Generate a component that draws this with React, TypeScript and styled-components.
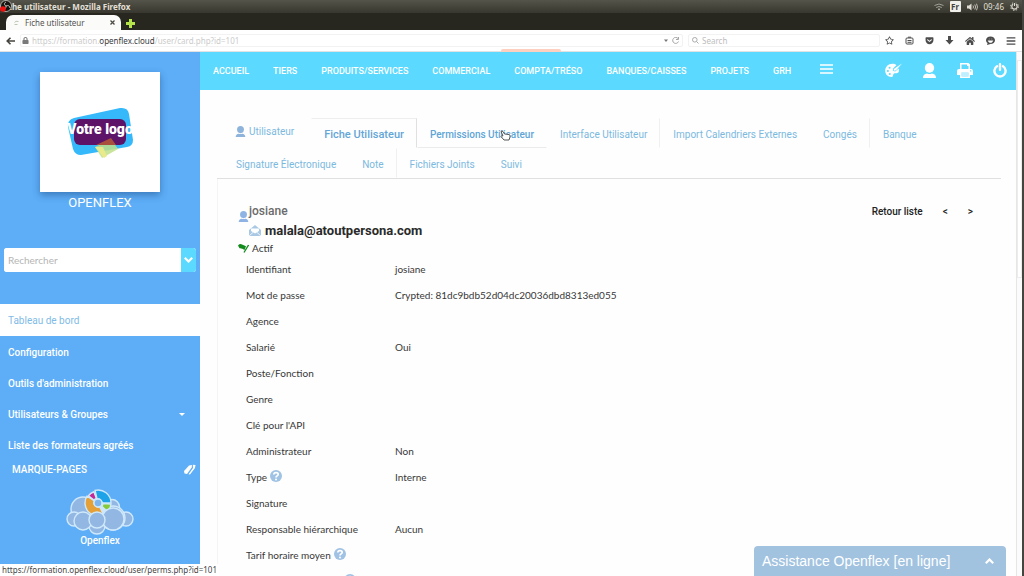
import React from "react";
import styled, { createGlobalStyle, css } from "styled-components";
import { FaRegStar, FaGetPocket, FaHome, FaBars, FaLock } from "react-icons/fa";

const ui = '"Noto Sans", "DejaVu Sans", sans-serif';
const roboto = 'Roboto, "Liberation Sans", sans-serif';
const lato = 'Lato, "Open Sans", sans-serif';

const GlobalStyle = createGlobalStyle`
  * { box-sizing: border-box; }
  body { margin: 0; background: #fff; font-family: ${roboto}; }
  a { color: inherit; text-decoration: none; }
  button { border: 0; padding: 0; background: none; color: inherit; font: inherit; cursor: pointer; }
  h1, p { margin: 0; padding: 0; }
  svg { display: block; flex: none; }
`;

const Screen = styled.div`
  position: relative;
  display: flex;
  flex-direction: column;
  height: 100vh;
  overflow: hidden;
  border-right: 2px solid #45443e;
`;

/* Desktop panel */
const Panel = styled.header`
  display: flex;
  align-items: center;
  justify-content: space-between;
  height: 13px;
  padding: 0 3px 0 1px;
  background: linear-gradient(#55544a, #38372f);
  color: #e4e0d8;
  font: 8px/13px ${ui};
  position: relative;
`;
const WindowTitle = styled.span`
  font-weight: 700;
`;
const Recorder = styled.span`
  position: absolute;
  left: 0;
  top: 0;
`;
const Indicators = styled.div`
  display: flex;
  align-items: center;
  gap: 6px;
`;
const Language = styled.span`
  width: 11px;
  height: 11px;
  border-radius: 1px;
  background: #f0efe9;
  color: #45443c;
  font: 700 8px/11px ${ui};
  text-align: center;
`;
const TabStrip = styled.div`
  display: flex;
  align-items: flex-end;
  gap: 5px;
  height: 17px;
  padding-left: 6px;
  background: #27261f;
`;
const BrowserTab = styled.div`
  display: flex;
  align-items: center;
  gap: 6px;
  width: 115px;
  height: 15px;
  padding: 0 6px 0 8px;
  border-radius: 7px 7px 0 0;
  background: #fbfbfa;
  color: #55544f;
  font: 8px/15px ${ui};
`;
const TabTitle = styled.span`
  flex: 1;
  white-space: nowrap;
`;
const NewTab = styled.button`
  height: 13px;
`;
const AddressRow = styled.div`
  display: flex;
  align-items: center;
  gap: 5px;
  height: 22px;
  padding: 0 6px 0 6px;
  border-bottom: 1px solid #e2e2e2;
  background: #fff;
  color: #4c4c4c;
`;
const Address = styled.div`
  display: flex;
  align-items: center;
  flex: 1;
  height: 13px;
  padding: 0 2px 0 1px;
  border: 1px solid #f2f2f2;
  border-radius: 2px;
  color: #cbcbcb;
  font: 8px/12px ${ui};
`;
const Url = styled.span`
  flex: 1;
  margin-left: 3px;
  white-space: nowrap;
`;
const Domain = styled.span`
  color: #3c3c3c;
`;
const SearchWeb = styled.label`
  display: flex;
  align-items: center;
  gap: 3px;
  width: 192px;
  height: 13px;
  padding: 0 3px;
  border: 1px solid #f2f2f2;
  border-radius: 2px;
  color: #999;
`;
const SearchWebInput = styled.input`
  flex: 1;
  min-width: 0;
  padding: 0;
  border: 0;
  outline: 0;
  background: none;
  font: 8px/12px ${ui};
  &::placeholder { color: #bdbdbd; opacity: 1; }
`;
const BrowserTools = styled.div`
  display: flex;
  align-items: center;
  gap: 11px;
`;
const Alert = styled.span`
  position: absolute;
  top: 49px;
  left: 49%;
  width: 60px;
  height: 3px;
  border-radius: 2px 2px 0 0;
  background: #fccfbe;
`;

/* Application */
const Viewport = styled.div`
  display: flex;
  flex: 1;
  min-height: 0;
`;
const Sidebar = styled.aside`
  display: flex;
  flex-direction: column;
  flex: none;
  width: 200px;
  margin-bottom: 12px;
  background: #5dadf7;
  color: #fff;
`;
const LogoCard = styled.div`
  display: flex;
  align-items: center;
  justify-content: center;
  align-self: center;
  width: 120px;
  height: 120px;
  margin-top: 20px;
  background: #fff;
  box-shadow: 0 3px 7px rgba(20, 60, 110, 0.45);
`;
const Company = styled.p`
  margin-top: 2px;
  font-size: 13px;
  line-height: 18px;
  text-align: center;
`;
const SideSearch = styled.form`
  display: flex;
  height: 24px;
  margin: 36px 4px 32px 4px;
  border-radius: 3px;
  background: #fff;
  overflow: hidden;
`;
const SideInput = styled.input`
  flex: 1;
  min-width: 0;
  padding: 0 4px;
  border: 0;
  outline: 0;
  color: #444;
  font: 10px/24px ${lato};
  &::placeholder { color: #b5b5b5; opacity: 1; }
`;
const SideSubmit = styled.button`
  display: flex;
  align-items: center;
  justify-content: center;
  width: 15px;
  background: #5cd9fe;
  color: #fff;
`;
const SideLink = styled.a<{ $active?: boolean }>`
  display: flex;
  align-items: center;
  justify-content: space-between;
  height: 31px;
  padding: 0 15px 0 8px;
  font-size: 10px;
  font-weight: 500;
  ${(p) => p.$active && css`
    height: 32px;
    margin-bottom: 1px;
    background: #fff;
    color: #7fbbe6;
    font-weight: 400;
  `}
`;
const Bookmarks = styled.div`
  display: flex;
  align-items: center;
  justify-content: space-between;
  height: 16px;
  padding: 0 4px 0 12px;
  font-size: 10px;
  font-weight: 500;
`;
const Brand = styled.div`
  display: flex;
  flex-direction: column;
  align-items: center;
  margin-top: 12px;
  font-size: 10px;
  font-weight: 500;
  line-height: 12px;
`;

const Main = styled.main`
  flex: 1;
  min-width: 0;
  overflow: hidden;
  background: #fefefe;
`;
const TopNav = styled.nav`
  display: flex;
  align-items: center;
  justify-content: space-between;
  height: 38px;
  padding: 0 9px 0 13px;
  background: #5cd9fe;
  color: #fff;
`;
const NavLinks = styled.div`
  display: flex;
  align-items: center;
  gap: 24px;
  font-size: 9px;
  font-weight: 500;
  white-space: nowrap;
`;
const MenuButton = styled.button`
  padding: 0 0 4px 5px;
`;
const NavTools = styled.div`
  display: flex;
  align-items: center;
  gap: 20px;
  padding-bottom: 2px;
`;
const Sheet = styled.section`
  margin: 28px 15px 0 17px;
`;
const Tabs = styled.nav`
  display: flex;
  flex-wrap: wrap;
  padding-left: 6px;
  border-bottom: 1px solid #e0e0e0;
  color: #7cb9de;
  font-size: 10px;
`;
const TabsTitle = styled.div`
  display: flex;
  align-items: center;
  gap: 3px;
  height: 30px;
  padding: 0 17px 4px 12px;
`;
const Tab = styled.a<{ $state?: "active" | "hover"; $divided?: boolean }>`
  height: 30px;
  padding: 0 12px;
  border: 1px solid transparent;
  border-right-color: ${(p) => (p.$divided ? "#f0f0f0" : "transparent")};
  line-height: 31px;
  white-space: nowrap;
  ${(p) => p.$state === "active" && css`
    border-color: #eee #e0e0e0 transparent transparent;
    color: #64a6d6;
    font-size: 11px;
    font-weight: 500;
  `}
  ${(p) => p.$state === "hover" && css`
    border-bottom-color: #ebebeb;
    color: #5fa5d6;
    font-weight: 500;
  `}
`;
const Card = styled.div`
  padding: 23px 20px 0 20px;
  border-left: 1px solid #f4f4f4;
`;
const CardHead = styled.div`
  display: flex;
  justify-content: space-between;
`;
const Identity = styled.div`
  display: flex;
  align-items: flex-start;
  color: #6b6b6b;
  font-size: 13px;
  font-weight: 700;
`;
const IdentityIcon = styled.span`
  padding-top: 9px;
`;
const Login = styled.h1`
  font: 500 12px/18px ${roboto};
`;
const Email = styled.a`
  display: flex;
  align-items: center;
  gap: 4px;
  height: 20px;
  color: #2a2a2a;
`;
const Status = styled.p`
  display: flex;
  align-items: center;
  gap: 3px;
  height: 16px;
  color: #333;
  font: 10px/16px ${lato};
`;
const Pager = styled.div`
  display: flex;
  gap: 20px;
  height: 18px;
  padding-right: 8px;
  color: #222;
  font-size: 10px;
  font-weight: 500;
  line-height: 20px;
`;
const Details = styled.table`
  width: 100%;
  border-collapse: collapse;
  table-layout: fixed;
  color: #383838;
  font: 10px/26px ${lato};
`;
const Label = styled.th`
  width: 157px;
  padding: 0 0 0 8px;
  font-weight: 400;
  text-align: left;
  vertical-align: top;
  white-space: nowrap;
`;
const LabelLine = styled.span<{ $tall?: boolean }>`
  display: flex;
  align-items: center;
  gap: 3px;
  height: ${(p) => (p.$tall ? 52 : 26)}px;
`;
const HelpMark = styled.span`
  align-self: flex-start;
  padding-top: 6px;
`;
const Value = styled.td`
  padding: 0;
`;
const Scrollbar = styled.div`
  flex: none;
  width: 6px;
  padding-top: 4px;
  border-left: 1px solid #e6e6e6;
  background: #fbfbfb;
`;
const Thumb = styled.div`
  height: 218px;
  margin-top: 4px;
  border: 1px solid #ececec;
  background: #fff;
`;

const StatusUrl = styled.div`
  position: absolute;
  left: 0;
  bottom: 0;
  height: 12px;
  padding: 0 2px;
  background: #fff;
  color: #444;
  font: 8px/12px ${ui};
  white-space: nowrap;
`;
const Chat = styled.button`
  position: absolute;
  right: 16px;
  bottom: 0;
  display: flex;
  align-items: center;
  justify-content: space-between;
  width: 252px;
  height: 30px;
  padding: 0 12px 0 8px;
  border-radius: 4px 4px 0 0;
  background: #a2c3df;
  color: #fff;
  font: 14px/30px "Liberation Sans", Arial, sans-serif;
`;
const Pointer = styled.span`
  position: absolute;
  top: 12px;
  left: 83px;
`;
const Anchor = styled.span`
  position: relative;
  display: flex;
`;

const Person = ({ size, color = "currentColor" }: { size: number; color?: string }) => (
  <svg width={size} height={size} viewBox="0 0 16 16" fill={color}>
    <ellipse cx="8" cy="5.200" rx="5" ry="5.200" />
    <path d="M1 16c0-3.200 1.800-4.600 4.400-4.900 1.700.8 3.500.8 5.200 0C13.200 11.400 15 12.800 15 16z" />
  </svg>
);

const Printer = () => (
  <svg width="16" height="15" viewBox="0 0 16 15">
    <path fill="#fff" fillRule="evenodd" d="M3 0h8.500L13 1.500V6h1q2 0 2 2v4h-3v3H3v-3H0V8q0-2 2-2h1zM4.500 1.500V6h7V3H10V1.500zM4.500 9.500v4h7v-4zM13.700 7.200a.7.7 0 1 0 0 1.400.7.7 0 0 0 0-1.400z" />
    <path fill="#fff" opacity=".6" d="M4.500 9.500h7v4h-7z" />
  </svg>
);

const Power = () => (
  <svg width="14" height="15" viewBox="0 0 14 15" fill="none" stroke="#fff" strokeWidth="2.400" strokeLinecap="round">
    <path d="M4 3.200a5.600 5.600 0 1 0 6 0M7 1.300v5.500" />
  </svg>
);

const Chevron = ({ up }: { up?: boolean }) => (
  <svg width="9" height="6" viewBox="0 0 9 6" fill="none" stroke="#fff" strokeWidth="2.200">
    <path d={up ? "m.8 5.200 3.700-3.700 3.700 3.700" : "m.8.8 3.700 3.700L8.200.8"} />
  </svg>
);

const Help = () => (
  <HelpMark>
    <svg width="12" height="12" viewBox="0 0 12 12">
      <circle cx="6" cy="6" r="6" fill="#a0c2e4" />
      <path d="M3.800 4.600C3.800 2 8.200 2 8.200 4.300 8.200 5.900 6 5.800 6 7.500" stroke="#fff" strokeWidth="1.700" fill="none" />
      <circle cx="6" cy="9.400" r="1" fill="#fff" />
    </svg>
  </HelpMark>
);

const YourLogo = () => (
  <svg width="68" height="52" viewBox="0 0 68 52">
    <path d="M8 12 54 2q8-1 9 6l4 26q0 6-6 7L15 49q-6 0-8-6L2 21q-1-7 6-9z" fill="#35b9fb" />
    <rect x="8" y="13" width="52" height="26" rx="6" fill="#5d1367" />
    <path d="m29 41 16-8 7 10-16 9z" fill="#bfe08a" opacity=".85" />
    <path d="m30 39 15-7 5 7z" fill="#a8503c" />
    <path d="m29 41 9 11 3-2-4-9z" fill="#e8ea8c" />
    <text x="34" y="28" textAnchor="middle" fill="#fff" fontFamily="Roboto, sans-serif" fontWeight="900" fontSize="14">Votre logo</text>
  </svg>
);

const ring = (from: number, to: number, inner: number, outer: number) => {
  const at = (deg: number, r: number) => {
    const a = (deg * Math.PI) / 180;
    return `${(32 + r * Math.cos(a)).toFixed(2)} ${(14 + r * Math.sin(a)).toFixed(2)}`;
  };
  return `M${at(from, outer)}A${outer} ${outer} 0 0 1 ${at(to, outer)}L${at(to, inner)}A${inner} ${inner} 0 0 0 ${at(from, inner)}z`;
};

const Cloud = () => (
  <svg width="68" height="46" viewBox="0 0 68 46" stroke="#cfe9fb" strokeWidth="1.400">
    <g fill="#93b7e3">
      <circle cx="17" cy="20" r="12" />
      <circle cx="46" cy="18" r="7.500" />
      <circle cx="31" cy="37" r="8" />
      <circle cx="8" cy="30" r="7" />
      <circle cx="60" cy="30" r="7" />
      <circle cx="17" cy="32" r="9" />
      <circle cx="47" cy="29" r="12" />
    </g>
    <circle cx="32" cy="14" r="11" fill="#cfe9fb" stroke="none" />
    <path d={ring(-103, 0, 4, 13)} fill="#1fa3e8" />
    <path d={ring(5, 42, 5, 13)} fill="#84ca3a" />
    <path d={ring(65, 212, 4, 13)} fill="#e5a038" />
    <path d={ring(217, 250, 5, 12)} fill="#c32a98" />
    <circle cx="32" cy="14" r="4" fill="#7db6ef" />
    <circle cx="47" cy="30" r="11" fill="#93b7e3" />
    <circle cx="31" cy="31" r="8" fill="#93b7e3" />
  </svg>
);

const Palette = () => (
  <svg width="17" height="15" viewBox="0 0 17 15">
    <path fill="#fff" fillRule="evenodd" d="M7.500.8C3 .8.200 4.100.200 7.700c0 3.900 3 6.200 6.100 6.200 2.200 0 1.400-2 2.200-3 1.200-1.400 4.700.4 5.400-2.700.2-1 .1-1.900-.3-2.800L10.200 8.400 7.800 7.700l.3-2.200 3.300-3.300c-1-.9-2.400-1.400-3.900-1.400zM4.600 3.700a1 1 0 1 1 0 2 1 1 0 0 1 0-2zM2.900 7a1 1 0 1 1 0 2 1 1 0 0 1 0-2zM4.800 10a1 1 0 1 1 0 2 1 1 0 0 1 0-2z" />
    <path fill="#fff" d="m17 .5-5.500 6.300L10 7.700 8.700 7.500 8.800 6z" />
  </svg>
);

const nav = ["Accueil", "Tiers", "Produits/Services", "Commercial", "Compta/Tréso", "Banques/Caisses", "Projets", "GRH"];

const details: { label: string; value?: string; help?: boolean; tall?: boolean }[] = [
  { label: "Identifiant", value: "josiane" },
  { label: "Mot de passe", value: "Crypted: 81dc9bdb52d04dc20036dbd8313ed055" },
  { label: "Agence" },
  { label: "Salarié", value: "Oui" },
  { label: "Poste/Fonction" },
  { label: "Genre" },
  { label: "Clé pour l'API" },
  { label: "Administrateur", value: "Non" },
  { label: "Type", value: "Interne", help: true },
  { label: "Signature" },
  { label: "Responsable hiérarchique", value: "Aucun" },
  { label: "Tarif horaire moyen", help: true },
  { label: "Tarif journalier moyen", help: true, tall: true },
];

export default function App() {
  return (
    <Screen>
      <GlobalStyle />
      <Panel>
        <WindowTitle>Fiche utilisateur - Mozilla Firefox</WindowTitle>
        <Recorder>
          <svg width="12" height="12" viewBox="0 0 12 12">
            <circle cx="6" cy="6" r="5.500" fill="#15140f" stroke="#cfcdc6" strokeWidth=".8" />
            <path d="M6 6C4 5 4 3 6 2M6 6c2-1 4 0 4 2M6 6c0 2-1 4-3 3" stroke="#cfcdc6" fill="none" />
            <circle cx="3" cy="9" r="2.800" fill="#f01010" />
          </svg>
        </Recorder>
        <Indicators>
          <svg width="10" height="8" viewBox="0 0 10 8" fill="none" stroke="#a3a198">
            <path d="M.5 2.500q4.500-3 9 0M2.200 4.500q2.800-2 5.600 0" />
            <path d="m4 6 1 1 1-1z" fill="#c5c3ba" />
          </svg>
          <Language>Fr</Language>
          <svg width="11" height="8" viewBox="0 0 11 8" fill="none" stroke="#dedbd2">
            <path d="M0 2.500h2L4.500.5v7L2 5.500H0z" fill="#dedbd2" stroke="none" />
            <path d="M6 2.500q1 1.500 0 3M7.800 1.500q1.600 2.500 0 5M9.500.7q2 3.300 0 6.600" strokeWidth=".8" />
          </svg>
          <span>09:46</span>
          <svg width="9" height="9" viewBox="0 0 9 9" fill="none" stroke="#dedbd2">
            <circle cx="4.500" cy="4.500" r="2.700" strokeWidth="1.200" />
            <circle cx="4.500" cy="4.500" r="3.900" strokeDasharray="1.500 1.560" />
            <path d="M4.500 0v4" stroke="#4a493f" strokeWidth="2.500" />
            <path d="M4.500 1v3" />
          </svg>
        </Indicators>
      </Panel>
      <TabStrip>
        <BrowserTab>
          <svg width="5" height="6" viewBox="0 0 5 6" fill="none" stroke="#b9c7b5"><path d="M.5 2.500q1-2 4-1M.5 4.500h3" /></svg>
          <TabTitle>Fiche utilisateur</TabTitle>
          <svg width="5" height="5" viewBox="0 0 5 5" stroke="#4c4b45" strokeWidth="1.300"><path d="m.5.5 4 4m0-4-4 4" /></svg>
        </BrowserTab>
        <NewTab aria-label="Nouvel onglet">
          <svg width="9" height="9" viewBox="0 0 9 9"><path d="M3 0h3v3h3v3H6v3H3V6H0V3h3z" fill="#b5e34a" /></svg>
        </NewTab>
      </TabStrip>
      <AddressRow>
        <svg width="9" height="8" viewBox="0 0 9 8" fill="none" stroke="#45443f" strokeWidth="1.600"><path d="M4.500.700 1.200 4l3.300 3.300M1.200 4H9" /></svg>
        <Address>
          <FaLock size={7} color="#7a7a7a" />
          <Url>https://formation.<Domain>openflex.cloud</Domain>/user/card.php?id=101</Url>
          <svg width="16" height="7" viewBox="0 0 16 7" fill="none" stroke="#a5a5a5">
            <path d="M0 2.500h4L2 5z" fill="#777" stroke="none" />
            <path d="M14 1.500a3 3 0 1 0 .5 3M14.500 0v2.500H12" />
          </svg>
        </Address>
        <SearchWeb>
          <svg width="7" height="7" viewBox="0 0 7 7" fill="none" stroke="#aaa"><circle cx="2.800" cy="2.800" r="2.300" /><path d="m4.500 4.500 2 2" /></svg>
          <SearchWebInput placeholder="Search" aria-label="Search" />
        </SearchWeb>
        <BrowserTools>
          <FaRegStar size={9} />
          <svg width="9" height="9" viewBox="0 0 9 9" fill="none" stroke="currentColor"><rect x="1" y="2" width="7" height="6" rx="1" /><path d="M3 1.200h3M2.500 4.500h4M2.500 6.300h4" /></svg>
          <FaGetPocket size={9} />
          <svg width="9" height="9" viewBox="0 0 9 9" fill="currentColor"><path d="M3 0h3v4h2.500l-4 4.500L.500 4H3z" /></svg>
          <FaHome size={10} />
          <svg width="9" height="9" viewBox="0 0 9 9"><path d="M4.500.5C7 .5 9 2 9 4.300S7 8 4.500 8L1 9l.6-2C.5 6.400 0 5.400 0 4.300 0 2 2 .5 4.500.5z" fill="currentColor" /><path d="M2 4.700h5q-.7 2-2.500 2T2 4.700zM2.800 3h1M5.200 3h1" fill="#fff" stroke="#fff" strokeWidth=".4" /></svg>
          <FaBars size={10} />
        </BrowserTools>
      </AddressRow>
      <Alert />
      <Viewport>
        <Sidebar>
          <LogoCard><YourLogo /></LogoCard>
          <Company>OPENFLEX</Company>
          <SideSearch>
            <SideInput placeholder="Rechercher" aria-label="Rechercher" />
            <SideSubmit type="button" aria-label="Choisir"><Chevron /></SideSubmit>
          </SideSearch>
          <nav>
            <SideLink href="#" $active>Tableau de bord</SideLink>
            <SideLink href="#">Configuration</SideLink>
            <SideLink href="#">Outils d'administration</SideLink>
            <SideLink href="#">
              Utilisateurs &amp; Groupes
              <svg width="6" height="3" viewBox="0 0 6 3"><path d="M0 0h6L3 3z" fill="#fff" /></svg>
            </SideLink>
            <SideLink href="#">Liste des formateurs agréés</SideLink>
          </nav>
          <Bookmarks>
            MARQUE-PAGES
            <svg width="12" height="11" viewBox="0 0 12 11" fill="#fff"><path d="M0 7 5 1.500 8 1l-.3 2.500L3 10 .5 9.500z" /><path d="m8.800.7 2.700.3-.5 3L6 10.500l-1.500-.2L9 4z" /></svg>
          </Bookmarks>
          <Brand><Cloud />Openflex</Brand>
        </Sidebar>
        <Main>
          <TopNav>
            <NavLinks>
              {nav.map((item) => <a href="#" key={item}>{item.toUpperCase()}</a>)}
              <MenuButton aria-label="Menu">
                <svg width="13" height="10" viewBox="0 0 13 10" stroke="#fff" strokeWidth="1.500"><path d="M0 1h13M0 5h13M0 9h13" /></svg>
              </MenuButton>
            </NavLinks>
            <NavTools>
              <Palette />
              <Person size={15} />
              <Printer />
              <Power />
            </NavTools>
          </TopNav>
          <Sheet>
            <Tabs>
              <TabsTitle><Person size={11} color="#8fb4dc" />Utilisateur</TabsTitle>
              <Tab href="#" $state="active">Fiche Utilisateur</Tab>
              <Anchor>
                <Tab href="#" $state="hover">Permissions Utilisateur</Tab>
                <Pointer>
                  <svg width="11" height="11" viewBox="0 0 11 11"><path d="M1 1.500q1-1 2 0L4.500 4l4.500.5q1.500.5 1 2.500l-1 3H4L1 6.500q0-1 1.500-.5L3 6z" fill="#fff" stroke="#444" strokeWidth=".9" /></svg>
                </Pointer>
              </Anchor>
              <Tab href="#" $divided>Interface Utilisateur</Tab>
              <Tab href="#">Import Calendriers Externes</Tab>
              <Tab href="#" $divided>Congés</Tab>
              <Tab href="#">Banque</Tab>
              <Tab href="#">Signature Électronique</Tab>
              <Tab href="#" $divided>Note</Tab>
              <Tab href="#">Fichiers Joints</Tab>
              <Tab href="#">Suivi</Tab>
            </Tabs>
            <Card>
              <CardHead>
                <Identity>
                  <IdentityIcon><Person size={11} color="#8fb4e4" /></IdentityIcon>
                  <div>
                    <Login>josiane</Login>
                    <Email href="#">
                      <svg width="12" height="11" viewBox="0 0 12 11"><path d="M0 5 6 0l6 5v6H0z" fill="#a9c8e4" /><path d="M2 3.500h8V6L6 8.500 2 6z" fill="#fff" /><path d="m0 11 4.500-4M12 11 7.500 7" stroke="#fff" strokeWidth=".8" /></svg>
                      malala@atoutpersona.com
                    </Email>
                  </div>
                </Identity>
                <Pager><a href="#">Retour liste</a><a href="#">&lt;</a><a href="#">&gt;</a></Pager>
              </CardHead>
              <Status>
                <svg width="11" height="9" viewBox="0 0 11 9"><path d="M0 1.500Q2-.8 4 .5l4 1.700L6.500 6Q4 4 1.500 4.300z" fill="#128a1c" /><path d="M10.500 1 6 8.500" stroke="#128a1c" strokeWidth="1.300" /></svg>
                Actif
              </Status>
              <Details>
                <tbody>
                  {details.map((row) => (
                    <tr key={row.label}>
                      <Label scope="row"><LabelLine $tall={row.tall}>{row.label}{row.help && <Help />}</LabelLine></Label>
                      <Value>{row.value}</Value>
                    </tr>
                  ))}
                </tbody>
              </Details>
            </Card>
          </Sheet>
        </Main>
        <Scrollbar><Thumb /></Scrollbar>
      </Viewport>
      <StatusUrl>https://formation.openflex.cloud/user/perms.php?id=101</StatusUrl>
      <Chat>Assistance Openflex [en ligne]<Chevron up /></Chat>
    </Screen>
  );
}
